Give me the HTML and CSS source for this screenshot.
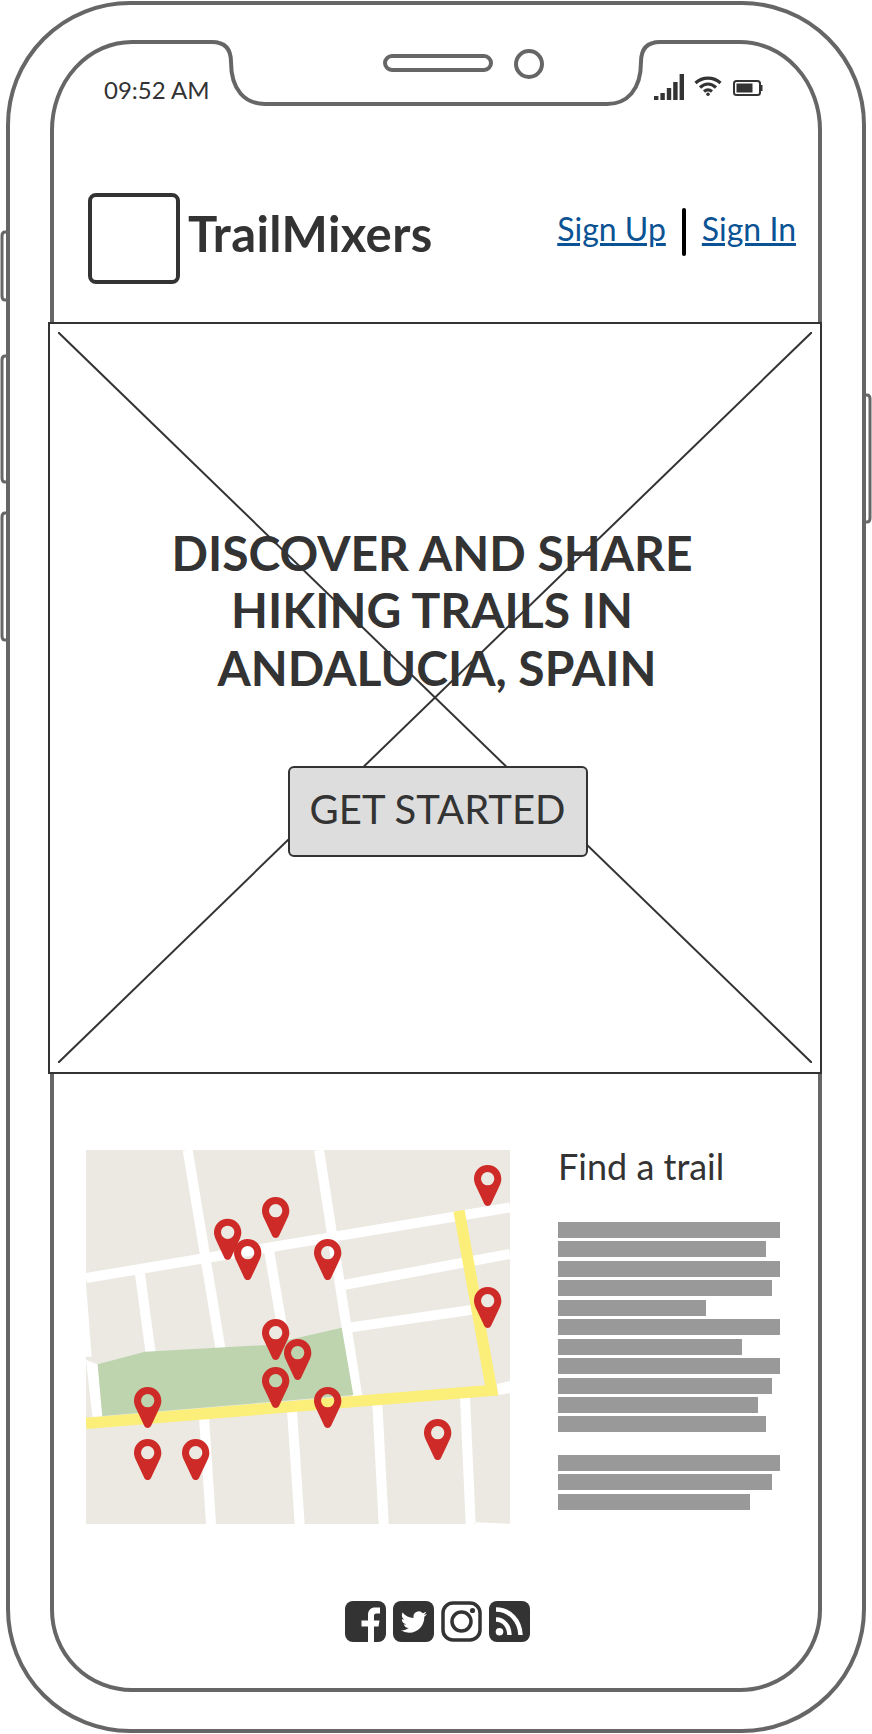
FILE: index.html
```html
<!DOCTYPE html>
<html lang="en">
<head>
    <meta charset="UTF-8">
    <title>TrailMixers</title>
    <link rel="stylesheet" href="styles.css">
</head>
<body>
    <svg width="0" height="0" class="defs">
        <defs>
            <path id="pin" fill-rule="evenodd" d="M0 -41C23 -41 41 -23 41 0C41 9 38 16 35 23L10 76C6 84 -6 84 -10 76L-35 23C-38 16 -41 9 -41 0C-41 -23 -23 -41 0 -41ZM0 -20A20 20 0 1 0 0 20A20 20 0 1 0 0 -20Z"/>
        </defs>
    </svg>

    <div class="phone">
        <!-- device outline -->
        <svg class="frame" viewBox="0 0 872 1734" width="872" height="1734">
            <g fill="none" stroke="#666" stroke-width="4">
                <rect x="8" y="3" width="856" height="1728" rx="122" ry="122"/>
                <path d="M132 42H212Q231 42 231 62C231 90 245 104 265 104H607C627 104 641 90 641 62Q641 42 660 42H740A80 88 0 0 1 820 130V1610A80 80 0 0 1 740 1690H132A80 80 0 0 1 52 1610V130A80 88 0 0 1 132 42Z"/>
                <rect x="385" y="56" width="106" height="14" rx="7"/>
                <circle cx="529" cy="64" r="13"/>
                <g stroke-width="3">
                    <path d="M8 232H5Q2 232 2 236V296Q2 300 5 300H8"/>
                    <path d="M8 356H5Q2 356 2 360V478Q2 482 5 482H8"/>
                    <path d="M8 513H5Q2 513 2 517V636Q2 640 5 640H8"/>
                    <path d="M864 395H867Q870 395 870 399V518Q870 522 867 522H864"/>
                </g>
            </g>
        </svg>

        <div class="screen">
            <div class="status">
                <span class="time">09:52 AM</span>
                <div class="status-icons">
                    <svg class="signal" width="30" height="26" viewBox="0 0 30 26" fill="#333">
                        <rect x="0" y="22" width="4.400" height="4"/>
                        <rect x="6.400" y="19" width="4.400" height="7"/>
                        <rect x="12.800" y="14" width="4.400" height="12"/>
                        <rect x="19.200" y="8" width="4.400" height="18"/>
                        <rect x="25.600" y="0" width="4.400" height="26"/>
                    </svg>
                    <svg class="wifi" width="28" height="20" viewBox="0 0 28 20" fill="none" stroke="#333" stroke-width="3.200">
                        <path d="M1.500 7C8.500 0.400 19.500 0.400 26.500 7"/>
                        <path d="M6 11.500C11 7 17 7 22 11.500"/>
                        <path d="M10 15.500C12.500 13.500 15.500 13.500 18 15.500"/>
                        <circle cx="14" cy="18.200" r="1.800" fill="#333" stroke="none"/>
                    </svg>
                    <svg class="battery" width="30" height="16" viewBox="0 0 30 16">
                        <rect x="1" y="1" width="26" height="14" rx="2.500" fill="none" stroke="#333" stroke-width="2"/>
                        <rect x="3.500" y="3.500" width="16" height="9" fill="#333"/>
                        <rect x="27.500" y="5" width="2" height="6" fill="#333"/>
                    </svg>
                </div>
            </div>

            <header class="site-header">
                <div class="brand">
                    <div class="logo"></div>
                    <div class="brand-name">TrailMixers</div>
                </div>
                <nav class="account-links">
                    <a href="#">Sign Up</a>
                    <span class="divider"></span>
                    <a href="#">Sign In</a>
                </nav>
            </header>

            <section class="hero">
                <svg class="hero-cross" viewBox="0 0 100 100" preserveAspectRatio="none">
                    <line x1="0" y1="0" x2="100" y2="100" vector-effect="non-scaling-stroke"/>
                    <line x1="100" y1="0" x2="0" y2="100" vector-effect="non-scaling-stroke"/>
                </svg>
                <h1 class="hero-title">
                    <span class="hero-line">DISCOVER AND SHARE</span>
                    <span class="hero-line">HIKING TRAILS IN</span>
                    <span class="hero-line hero-line-last">ANDALUCIA, SPAIN</span>
                </h1>
                <button class="hero-button">GET STARTED</button>
            </section>

            <section class="finder">
                <svg class="map" width="424" height="374" viewBox="78 60 1272 1122">
                    <rect x="78" y="60" width="1272" height="1122" fill="#ebe9e2"/>
                    <g stroke="#fff" stroke-width="30" fill="none">
                        <path d="M383 60L482 660"/>
                        <path d="M432 860L453 1182"/>
                        <path d="M240 432L272 670"/>
                        <path d="M777 60L892 800"/>
                        <path d="M626 355L666 590"/>
                        <path d="M696 840L719 1182"/>
                        <path d="M952 820L971 1182"/>
                        <path d="M1215 800L1232 1182"/>
                        <path d="M78 444L1350 232"/>
                        <path d="M850 465L1350 372"/>
                        <path d="M872 592L1240 539"/>
                    </g>
                    <polygon fill="#fff" points="78,460 95,680 78,680"/>
                    <polygon fill="#fff" points="78,690 113,703 127,860 97,860"/>
                    <polygon fill="#fff" points="1310,762 1350,753 1350,790 1315,795"/>
                    <polygon fill="#fff" points="1248,1177 1350,1181 1350,1182 1248,1182"/>
                    <polygon fill="#bdd4ae" points="113,703 255,665 620,645 845,593 880,795 127,858"/>
                    <path d="M78 880L1295 781L1197 242" fill="none" stroke="#fbef7a" stroke-width="34"/>
                    <g fill="#ce2a27">
                        <use href="#pin" x="1283" y="146"/>
                        <use href="#pin" x="647" y="242"/>
                        <use href="#pin" x="503" y="307"/>
                        <use href="#pin" x="563" y="368"/>
                        <use href="#pin" x="803" y="368"/>
                        <use href="#pin" x="1283" y="512"/>
                        <use href="#pin" x="647" y="608"/>
                        <use href="#pin" x="713" y="668"/>
                        <use href="#pin" x="647" y="752"/>
                        <use href="#pin" x="263" y="812"/>
                        <use href="#pin" x="803" y="812"/>
                        <use href="#pin" x="263" y="968"/>
                        <use href="#pin" x="407" y="968"/>
                        <use href="#pin" x="1133" y="908"/>
                    </g>
                </svg>

                <div class="finder-text">
                    <h2 class="finder-title">Find a trail</h2>
                    <div class="text-block">
                        <div class="text-line w222"></div>
                        <div class="text-line w208"></div>
                        <div class="text-line w222"></div>
                        <div class="text-line w214"></div>
                        <div class="text-line w148"></div>
                        <div class="text-line w222"></div>
                        <div class="text-line w184"></div>
                        <div class="text-line w222"></div>
                        <div class="text-line w214"></div>
                        <div class="text-line w200"></div>
                        <div class="text-line w208"></div>
                    </div>
                    <div class="text-block">
                        <div class="text-line w222"></div>
                        <div class="text-line w214"></div>
                        <div class="text-line w192"></div>
                    </div>
                </div>
            </section>

            <footer class="social">
                <svg width="41" height="41" viewBox="0 0 41 41">
                    <rect width="41" height="41" rx="8" fill="#333"/>
                    <path fill="#fff" d="M23 41V25.500H16.500V19.500H23V14C23 9 26 6.500 30 6.500H35V12.500H31.500C29.500 12.500 29 13.500 29 15V19.500H34.500L33.500 25.500H29V41Z"/>
                </svg>
                <svg width="41" height="41" viewBox="0 0 41 41">
                    <rect width="41" height="41" rx="8" fill="#333"/>
                    <g transform="translate(7.800 8) scale(1.090)">
                        <path fill="#fff" d="M23.953 4.57a10 10 0 01-2.825.775 4.958 4.958 0 002.163-2.723c-.951.555-2.005.959-3.127 1.184a4.92 4.92 0 00-8.384 4.482C7.69 8.095 4.067 6.13 1.64 3.162a4.822 4.822 0 00-.666 2.475c0 1.71.87 3.213 2.188 4.096a4.904 4.904 0 01-2.228-.616v.06a4.923 4.923 0 003.946 4.827 4.996 4.996 0 01-2.212.085 4.936 4.936 0 004.604 3.417 9.867 9.867 0 01-6.102 2.105c-.39 0-.779-.023-1.17-.067a13.995 13.995 0 007.557 2.209c9.053 0 13.998-7.496 13.998-13.985 0-.21 0-.42-.015-.63A9.935 9.935 0 0024 4.59z"/>
                    </g>
                </svg>
                <svg width="41" height="41" viewBox="0 0 41 41">
                    <rect x="2" y="2" width="37" height="37" rx="10" fill="none" stroke="#333" stroke-width="3.500"/>
                    <circle cx="20.500" cy="20.500" r="9.500" fill="none" stroke="#333" stroke-width="3.500"/>
                    <circle cx="31.500" cy="9.500" r="2.600" fill="#333"/>
                </svg>
                <svg width="41" height="41" viewBox="0 0 41 41">
                    <rect width="41" height="41" rx="8" fill="#333"/>
                    <circle cx="10.500" cy="30.700" r="3.800" fill="#fff"/>
                    <g fill="none" stroke="#fff" stroke-width="4.500">
                        <path d="M7 18.500C15 18.500 20 25 20.500 34"/>
                        <path d="M7 8.500C21 8.500 31 20 31.500 34"/>
                    </g>
                </svg>
            </footer>
        </div>
    </div>
</body>
</html>
```

FILE: styles.css
```css
* {
    box-sizing: border-box;
}

body {
    margin: 0;
    background-color: #fff;
    font-family: 'Lato', 'Liberation Sans', sans-serif;
    color: #333;
}

.defs {
    position: absolute;
}

.phone {
    position: relative;
    width: 872px;
    height: 1734px;
    overflow: hidden;
}

.frame {
    position: absolute;
    top: 0;
    left: 0;
}

.screen {
    position: relative;
    width: 772px;
    margin-left: 49px;
}

/* status bar */
.status {
    display: flex;
    justify-content: space-between;
    padding: 75px 58px 0 55px;
    height: 104px;
}

.time {
    font-size: 24px;
    line-height: 29px;
}

.status-icons {
    display: flex;
    align-items: flex-start;
    margin-top: -1px;
}

.signal {
    margin-right: 10px;
}

.wifi {
    margin-top: 2px;
    margin-right: 11px;
}

.battery {
    margin-top: 6px;
}

/* header */
.site-header {
    display: flex;
    justify-content: space-between;
    align-items: flex-start;
    height: 218px;
    padding: 89px 25px 0 39px;
}

.brand {
    display: flex;
    align-items: flex-start;
}

.logo {
    width: 92px;
    height: 91px;
    border: 4px solid #333;
    border-radius: 8px;
}

.brand-name {
    margin-left: 8px;
    margin-top: 11px;
    font-size: 49px;
    line-height: 58px;
    font-weight: 700;
    letter-spacing: 0.4px;
}

.account-links {
    display: flex;
    align-items: flex-start;
    gap: 16px;
    margin-top: 15px;
    font-size: 32px;
    line-height: 38px;
}

.account-links a {
    margin-top: 2px;
    color: #0b5394;
    text-decoration: underline;
    text-decoration-thickness: 2.5px;
}

.divider {
    width: 4px;
    height: 48px;
    background-color: #000;
    border-radius: 2px;
}

/* hero */
.hero {
    position: relative;
    display: flex;
    flex-direction: column;
    align-items: center;
    height: 752px;
    margin: 0 -1px;
    padding-top: 199.500px;
    border: 2px solid #333;
    background-color: #fff;
}

.hero-cross {
    position: absolute;
    top: 8px;
    left: 8px;
    width: calc(100% - 16px);
    height: calc(100% - 17px);
}

.hero-cross line {
    stroke: #333;
    stroke-width: 2;
}

.hero-title {
    position: relative;
    margin: 0;
    font-size: 48px;
    line-height: 57.6px;
    font-weight: 700;
    text-align: center;
}

.hero-line {
    display: block;
    margin-right: 6px;
}

.hero-line-last {
    margin-right: 0;
    margin-left: 4px;
}

.hero-button {
    position: relative;
    width: 300px;
    height: 91px;
    margin-top: 70px;
    margin-left: 5px;
    padding: 0 0 6px;
    font-family: inherit;
    font-size: 40px;
    color: #333;
    background-color: #ddd;
    border: 2px solid #333;
    border-radius: 6px;
}

/* map and text */
.finder {
    display: flex;
    padding: 71px 0 0 37px;
    height: 449px;
    align-items: flex-start;
}

.map {
    display: block;
    margin-top: 5px;
    flex-shrink: 0;
}

.finder-text {
    margin-left: 48px;
}

.finder-title {
    margin: 0 0 34px;
    font-size: 36px;
    line-height: 43px;
    font-weight: 400;
}

.text-block {
    margin-bottom: 22.500px;
}

.text-line {
    height: 16px;
    margin-bottom: 3.450px;
    background-color: #999;
}

.w222 { width: 222px; }
.w214 { width: 214px; }
.w208 { width: 208px; }
.w200 { width: 200px; }
.w192 { width: 192px; }
.w184 { width: 184px; }
.w148 { width: 148px; }

/* social icons */
.social {
    display: flex;
    gap: 7px;
    padding-left: 296px;
    margin-top: 78px;
}

.social svg {
    display: block;
}
```
